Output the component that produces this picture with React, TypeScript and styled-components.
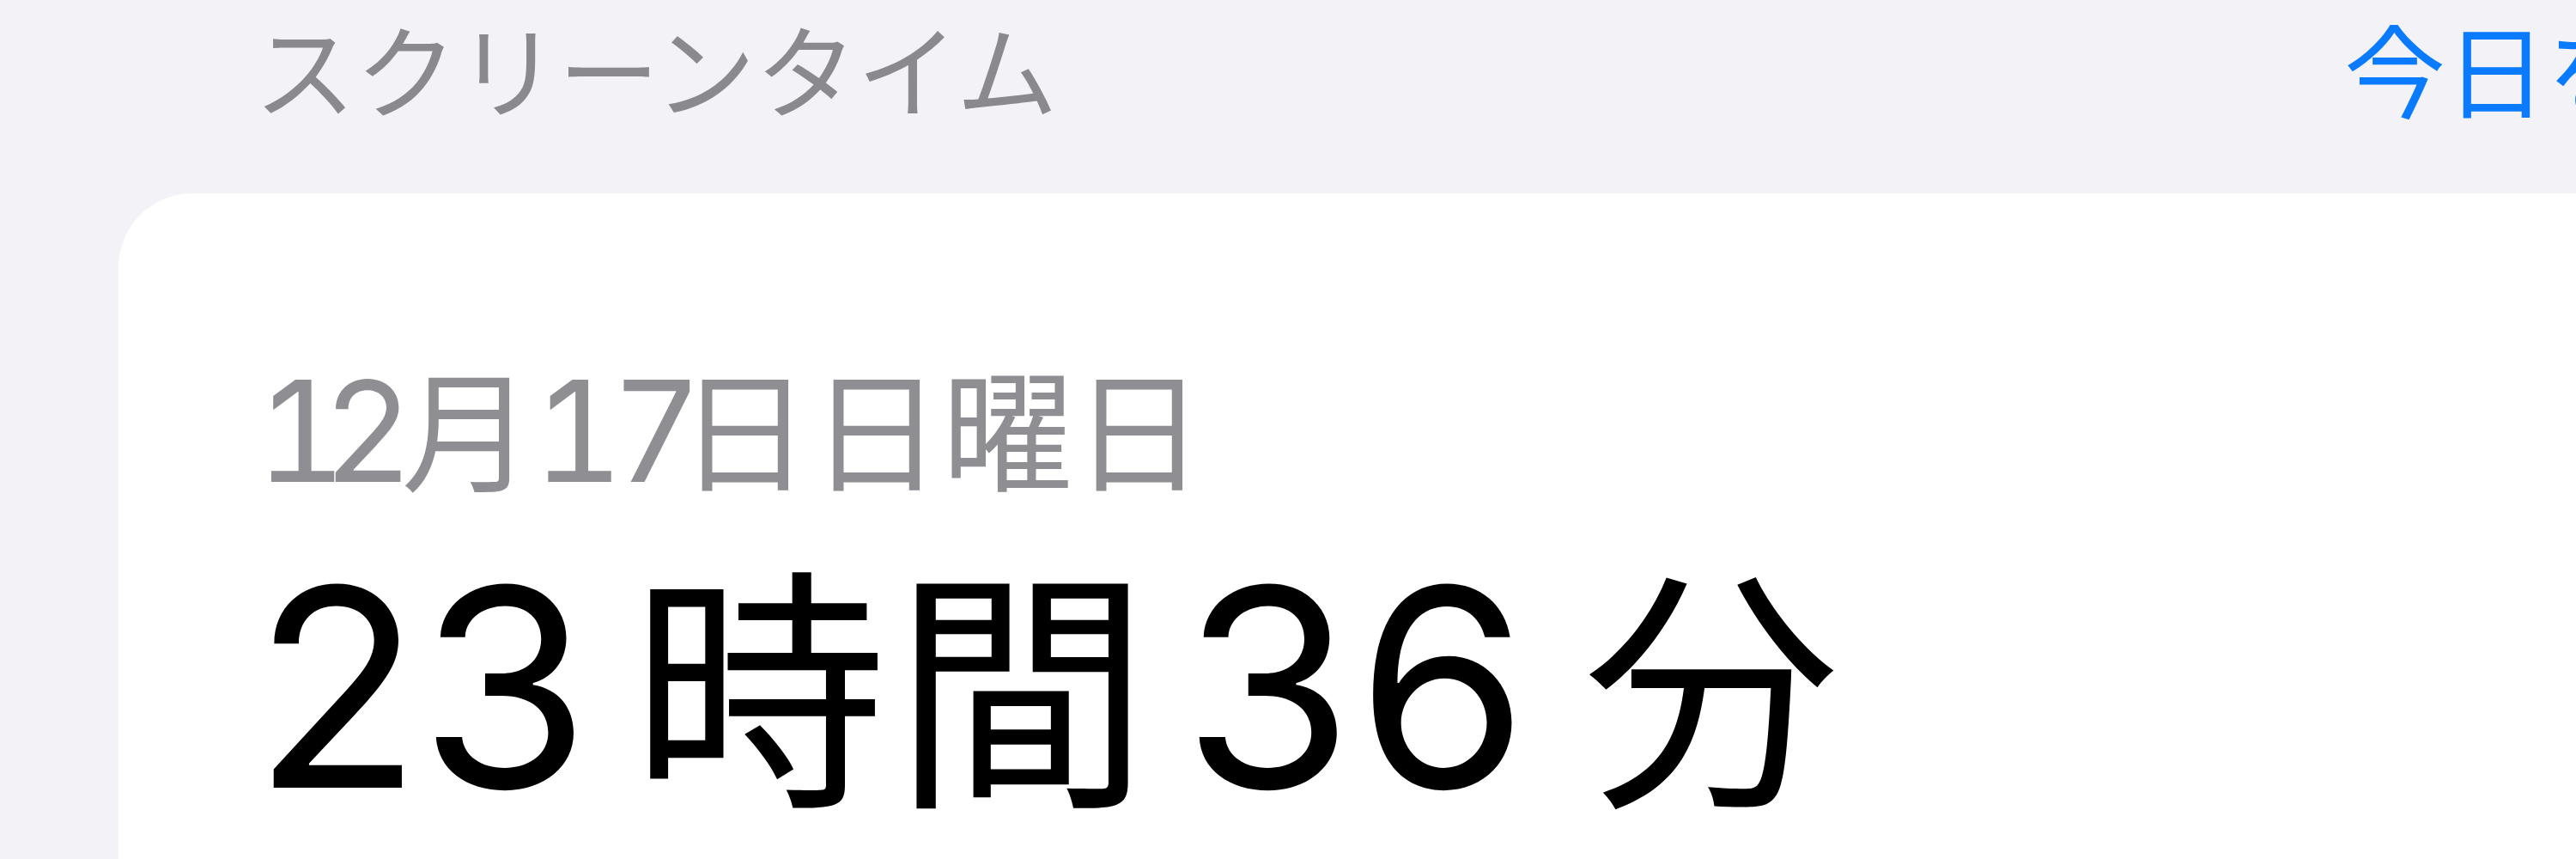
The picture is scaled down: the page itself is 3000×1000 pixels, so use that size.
import React from 'react'
import styled, {createGlobalStyle} from 'styled-components'

const GlobalStyle = createGlobalStyle`
  html, body {
    margin: 0;
    padding: 0;
    background: #f2f2f7;
    overflow: hidden;
  }

  body {
    font-family: "Noto Sans CJK JP", sans-serif;
    -webkit-font-smoothing: antialiased;
  }
`

const Screen = styled.div`
  width: 3400px;
  display: flex;
  flex-direction: column;
`

const SectionHeader = styled.div`
  display: flex;
  align-items: baseline;
  padding: 19px 80px 0 296px;
  font-size: 118px;
  line-height: 1;
`

const HeaderTitle = styled.span`
  color: #8a8a8e;
`

const HeaderLink = styled.span`
  margin-left: auto;
  color: #0a7aff;
  white-space: nowrap;
`

const Card = styled.section`
  margin: 88px 138px 0;
  min-height: 900px;
  padding: 193px 160px 0;
  background: #ffffff;
  border-radius: 86px;
  display: flex;
  flex-direction: column;
  gap: 55px;
`

const DateLabel = styled.div`
  color: #8e8e93;
  font-size: 153px;
  line-height: 1;
  white-space: nowrap;
`

const TotalTime = styled.div`
  margin-left: -9px;
  color: #000000;
  font-size: 298px;
  line-height: 1;
  white-space: nowrap;
`

// digits are SF-like tabular figures, a little larger than the kanji next to them.
// the tracking only tightens between digits; $end sets the space after the run
const Num = styled.span<{$size: number; $track?: number; $end?: number}>`
  font-family: Inter, "Liberation Sans", sans-serif;
  font-size: ${p => p.$size}px;
  font-variant-numeric: tabular-nums;
  letter-spacing: ${p => p.$track ?? 0}px;
  margin-right: ${p => p.$end ?? -(p.$track ?? 0)}px;
`

const Kanji = styled.span<{$before?: number; $after?: number; $track?: number}>`
  margin: 0 ${p => p.$after ?? 0}px 0 ${p => p.$before ?? 0}px;
  letter-spacing: ${p => p.$track ?? 0}px;
`

const App: React.FC = () => {
  return (
    <>
      <GlobalStyle/>
      <Screen>
        <SectionHeader>
          <HeaderTitle>スクリーンタイム</HeaderTitle>
          <HeaderLink>今日を表示</HeaderLink>
        </SectionHeader>
        <Card>
          <DateLabel>
            <Num $size={163} $track={-28} $end={14}>12</Num>
            <Kanji>月</Kanji>
            <Num $size={163} $track={-14} $end={-13}>17</Num>
            <Kanji>日日曜日</Kanji>
          </DateLabel>
          <TotalTime>
            <Num $size={322} $track={-10}>23</Num>
            <Kanji $before={38} $after={30} $track={8}>時間</Kanji>
            <Num $size={322} $track={-10}>36</Num>
            <Kanji $before={60}>分</Kanji>
          </TotalTime>
        </Card>
      </Screen>
    </>
  )
}

export default App
